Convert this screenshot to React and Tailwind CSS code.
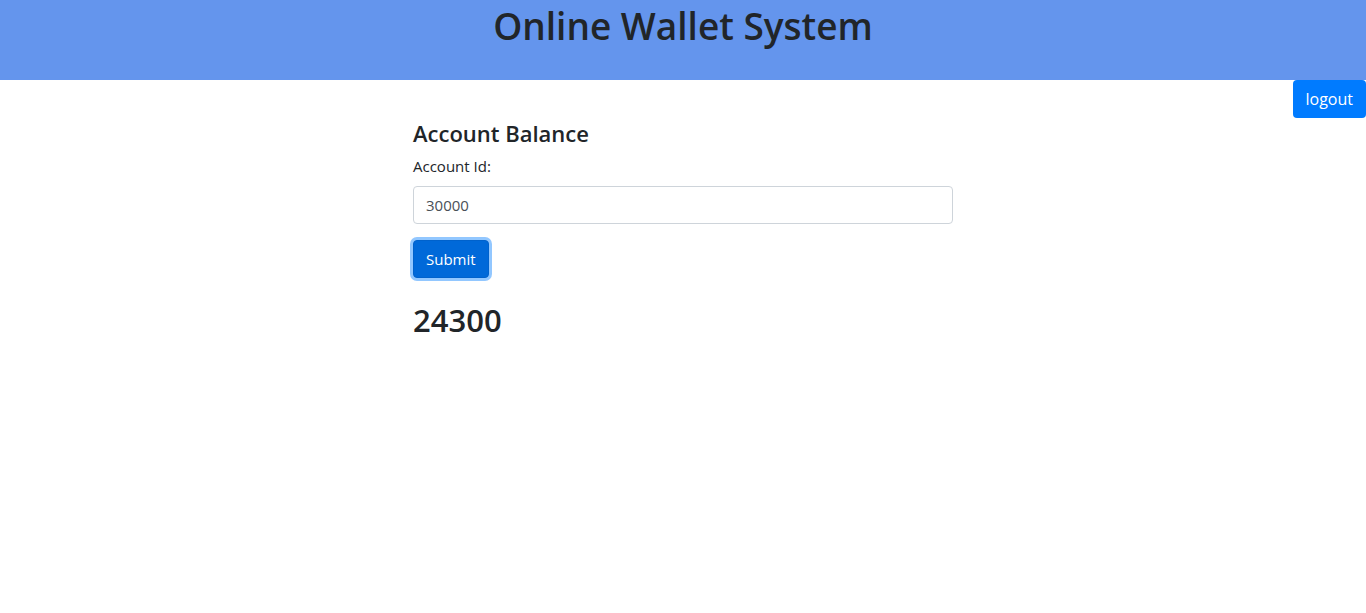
import React, { useState } from 'react';

const font = { fontFamily: '"Open Sans", "Noto Sans", sans-serif' };

export default function App() {
  const [accountId, setAccountId] = useState('30000');

  return (
    <div className="min-h-[613px] bg-white text-[#212529]" style={font}>
      <header className="h-[80px] bg-[#6495ed] flex justify-center">
        <h1 className="text-[37px] leading-[1.2] font-semibold mt-[4px]">Online Wallet System</h1>
      </header>

      <div className="flex justify-end">
        <button className="h-[38px] px-[13px] bg-[#007bff] text-white text-[16px] rounded-[4px]">logout</button>
      </div>

      <div className="w-[540px] ml-[413px] mt-[2px]">
        <h4 className="text-[22px] leading-[1.2] font-semibold mb-[8px]">Account Balance</h4>
        <label className="block text-[15px] leading-[24px] mb-[8px]">Account Id:</label>
        <input
          value={accountId}
          onChange={(e) => setAccountId(e.target.value)}
          className="block w-full h-[38px] px-[12px] text-[15px] text-[#495057] border border-[#ced4da] rounded-[4px] outline-none"
        />
        <button className="mt-[16px] h-[38px] px-[12px] bg-[#0069d9] border border-[#0062cc] text-white text-[15px] rounded-[4px] shadow-[0_0_0_3px_rgba(38,143,255,0.5)]">
          Submit
        </button>
        <h2 className="mt-[24px] text-[31px] leading-[1.2] font-semibold">24300</h2>
      </div>
    </div>
  );
}
